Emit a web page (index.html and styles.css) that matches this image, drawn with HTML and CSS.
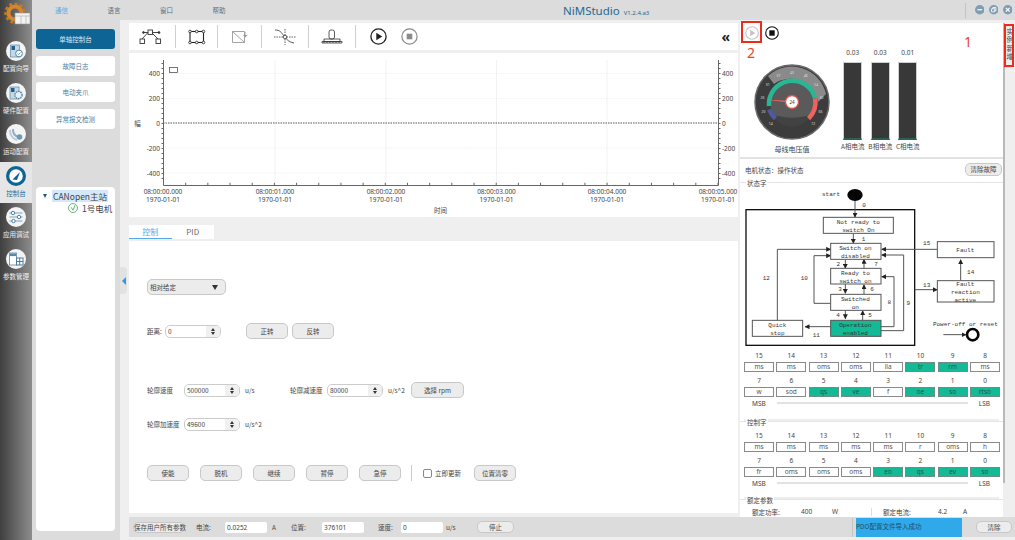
FILE: index.html
```html
<!DOCTYPE html>
<html lang="zh-CN">
<head>
    <meta charset="UTF-8">
    <title>NiMStudio</title>
    <link rel="stylesheet" href="styles.css">
</head>
<body>
<div class="app">
    <!-- 左侧图标栏 -->
    <div class="rail">
        <div class="logo">
            <svg width="26" height="24" viewBox="0 0 26 24">
                <circle cx="11" cy="10" r="6.5" fill="none" stroke="#d4862a" stroke-width="4"/>
                <circle cx="11" cy="10" r="9.5" fill="none" stroke="#c9791f" stroke-width="2.4" stroke-dasharray="3 2.5"/>
                <rect x="11" y="10" width="15" height="11" fill="#f2f2f2" stroke="#999" stroke-width=".6"/>
                <path d="M11 13h15M17 13v8M22 13v8" stroke="#aaa" stroke-width=".6"/>
            </svg>
        </div>
        <div class="rail-item">
            <svg class="rail-icon" viewBox="0 0 20 20"><circle cx="10" cy="10" r="10" fill="#f4f4f4"/><rect x="4.5" y="4" width="9" height="12" fill="#c5d8e6" stroke="#5b86a6" stroke-width=".7"/><rect x="5.5" y="5" width="3.5" height="4" fill="#22608c"/><circle cx="13" cy="12.5" r="3.4" fill="#fff" stroke="#4d83a8"/><path d="M11.6 12.5l1 1 1.8-1.9" fill="none" stroke="#4d83a8" stroke-width=".8"/></svg>
            <span>配置向导</span>
        </div>
        <div class="rail-item">
            <svg class="rail-icon" viewBox="0 0 20 20"><circle cx="10" cy="10" r="10" fill="#f4f4f4"/><rect x="4" y="4" width="9" height="12" fill="#c5d8e6" stroke="#5b86a6" stroke-width=".7"/><rect x="5" y="5" width="3.5" height="4" fill="#22608c"/><circle cx="12.5" cy="12" r="3.6" fill="#e8f0f6" stroke="#4d83a8" stroke-width="1.3" stroke-dasharray="1.6 .7"/></svg>
            <span>硬件配置</span>
        </div>
        <div class="rail-item">
            <svg class="rail-icon" viewBox="0 0 20 20"><circle cx="10" cy="10" r="10" fill="#f4f4f4"/><path d="M4 6a10 10 0 0 0 7 10" fill="none" stroke="#b5cbda" stroke-width="2"/><path d="M7 5a8 8 0 0 0 5 8" fill="none" stroke="#8fb0c6" stroke-width="2"/><circle cx="13.5" cy="13" r="2.8" fill="#6f9ab6"/></svg>
            <span>运动配置</span>
        </div>
        <div class="rail-item active">
            <svg class="rail-icon" viewBox="0 0 20 20"><circle cx="10" cy="10" r="8.4" fill="#fff" stroke="#0f6496" stroke-width="3.2"/><path d="M6.5 13.5L14 6l-3 8z" fill="#0f6496"/></svg>
            <span>控制台</span>
        </div>
        <div class="rail-item">
            <svg class="rail-icon" viewBox="0 0 20 20"><circle cx="10" cy="10" r="10" fill="#f4f4f4"/><path d="M3.5 6h13M3.5 10h13M3.5 14h13" stroke="#6f9ab6" stroke-width=".9"/><circle cx="7" cy="6" r="1.7" fill="#fff" stroke="#4d83a8"/><circle cx="13" cy="10" r="1.7" fill="#fff" stroke="#4d83a8"/><circle cx="7.5" cy="14" r="1.7" fill="#fff" stroke="#4d83a8"/></svg>
            <span>应用调试</span>
        </div>
        <div class="rail-item">
            <svg class="rail-icon" viewBox="0 0 20 20"><circle cx="10" cy="10" r="10" fill="#f4f4f4"/><rect x="3.5" y="4" width="7" height="12" fill="#fff" stroke="#5b86a6" stroke-width=".8"/><rect x="4" y="4.5" width="6" height="2.6" fill="#5b86a6"/><rect x="10.5" y="9" width="6.5" height="7" fill="#fff" stroke="#4d7b9c"/><path d="M13.7 9v7M10.5 12.5h6.5" stroke="#4d7b9c"/></svg>
            <span>参数管理</span>
        </div>
    </div>

    <div class="shell">
        <!-- 顶部菜单 -->
        <div class="topbar">
            <div class="menu">
                <span class="menu-item current">通信</span>
                <span class="menu-item">语言</span>
                <span class="menu-item">窗口</span>
                <span class="menu-item">帮助</span>
            </div>
            <div class="title">NiMStudio <small>V1.2.4.a3</small></div>
            <div class="win-btns">
                <span class="win-sep"></span>
                <svg class="win-btn" viewBox="0 0 10 10"><circle cx="5" cy="5" r="5" fill="#7f9db3"/><path d="M2.5 5h5" stroke="#fff" stroke-width="1.2"/></svg>
                <svg class="win-btn" viewBox="0 0 10 10"><circle cx="5" cy="5" r="5" fill="#7f9db3"/><path d="M2.7 4h3.3v3.2H2.7zM4 4V2.7h3.3V6H6" fill="none" stroke="#fff" stroke-width=".9"/></svg>
                <svg class="win-btn" viewBox="0 0 10 10"><circle cx="5" cy="5" r="5" fill="#7f9db3"/><path d="M3 3l4 4M7 3l-4 4" stroke="#fff" stroke-width="1.2"/></svg>
            </div>
        </div>

        <div class="body">
            <!-- 功能导航 -->
            <div class="nav">
                <div class="nav-btn selected">单轴控制台</div>
                <div class="nav-btn">故障日志</div>
                <div class="nav-btn">电动夹爪</div>
                <div class="nav-btn">异常报文检测</div>
                <div class="tree">
                    <div class="tree-root">
                        <i class="tree-arrow"></i>
                        <span class="tree-label">CANopen主站</span>
                    </div>
                    <div class="tree-child">
                        <svg width="10" height="10" viewBox="0 0 10 10"><circle cx="5" cy="5" r="4.5" fill="#fff" stroke="#3fa35a" stroke-width=".8"/><path d="M3 4.2l2 3 2-5" fill="none" stroke="#3fa35a" stroke-width=".8"/></svg>
                        <span>1号电机</span>
                    </div>
                </div>
            </div>
            <div class="gutter"><div class="collapse"><i></i></div></div>

            <div class="content">
                <div class="upper">
                    <div class="main">
                        <!-- 工具栏 -->
                        <div class="toolbar">
                            <div class="tool tool-wide">
                                <svg width="26" height="20" viewBox="0 0 26 20" fill="none" stroke="#333" stroke-width=".9"><rect x="1" y="12" width="4.5" height="4.5"/><rect x="17" y="12" width="4.5" height="4.5"/><rect x="9" y="3" width="4.5" height="4.5"/><path d="M3 12L9 5.5M13 6l6 6M4.500 5.500H9M13.500 5.500h6.500"/><circle cx="4.500" cy="5.500" r=".9" fill="#333"/><circle cx="20" cy="5.500" r=".9" fill="#333"/></svg>
                            </div>
                            <div class="tool tool-narrow">
                                <svg width="18" height="16" viewBox="0 0 18 16" fill="none" stroke="#222"><rect x="2" y="2.5" width="13.5" height="11" stroke-width="1.1"/><g fill="#fff" stroke-width=".8"><circle cx="2" cy="2.5" r="1.3"/><circle cx="8.7" cy="2.5" r="1.3"/><circle cx="15.5" cy="2.5" r="1.3"/><circle cx="2" cy="13.5" r="1.3"/><circle cx="8.7" cy="13.5" r="1.3"/><circle cx="15.5" cy="13.5" r="1.3"/></g></svg>
                            </div>
                            <div class="tool">
                                <svg width="18" height="16" viewBox="0 0 18 16" fill="none" stroke="#999" stroke-width=".9"><path d="M1.5 2.5h12v11h-12zM1.5 2.5l12 11"/><path d="M14 3v4"/><path d="M12 6h4.500l-2.200 2.500z" fill="#999" stroke="none"/></svg>
                            </div>
                            <div class="tool tool-wide">
                                <svg width="22" height="18" viewBox="0 0 22 18" fill="none" stroke="#333" stroke-width=".8"><path d="M1 2c5 0 6 2 9 6s5 6 10 7"/><path d="M0 9h22" stroke-dasharray="1.500 1"/><path d="M11 1v16" stroke-dasharray="1.500 1"/><circle cx="11" cy="9" r="1.800" fill="#fff"/></svg>
                            </div>
                            <div class="tool tool-wide">
                                <svg width="22" height="18" viewBox="0 0 22 18" fill="none" stroke="#333" stroke-width=".8"><rect x="8" y="2" width="5.500" height="9" rx="2"/><path d="M3 11h16v2.500H3zM1 13.500h20v1.500H1z"/><path d="M3 13.500v1.500M6 13.500v1.500M9 13.500v1.500M12 13.500v1.500M15 13.500v1.500M18 13.500v1.500"/></svg>
                            </div>
                            <svg class="round-btn" width="17" height="17" viewBox="0 0 17 17"><circle cx="8.500" cy="8.500" r="7.600" fill="#fff" stroke="#222" stroke-width="1.300"/><path d="M6.300 4.800v7.400l6-3.700z" fill="#222"/></svg>
                            <svg class="round-btn" width="17" height="17" viewBox="0 0 17 17"><circle cx="8.500" cy="8.500" r="7.600" fill="#fff" stroke="#8a8a8a" stroke-width="1.200"/><rect x="5.700" y="5.700" width="5.600" height="5.600" fill="#8a8a8a"/></svg>
                            <span class="chevrons">«</span>
                        </div>

                        <!-- 曲线 -->
                        <div class="chart">
                            <svg width="609" height="164" viewBox="129 53 609 164" font-family="Noto Sans, sans-serif" font-size="6.500" fill="#444">
                                <g stroke="#ececec" stroke-width=".7">
                                    <path d="M275 60v125M386 60v125M496.500 60v125M607 60v125"/>
                                    <path d="M163 73.500h555M163 98.500h555M163 148h555M163 173h555" stroke-dasharray="1.500 1"/>
                                </g>
                                <path d="M163 123h555" stroke="#555" stroke-dasharray="1.500 1"/>
                                <path d="M163.500 60v125.500H718.500V60" fill="none" stroke="#666"/>
                                <path d="M163 184h556" stroke="#666" stroke-width="2.500" stroke-dasharray="1 21.180"/>
                                <path d="M162.500 63v120" stroke="#666" stroke-width="2" stroke-dasharray="1 4"/>
                                <path d="M719.500 63v120" stroke="#666" stroke-width="2" stroke-dasharray="1 4"/>
                                <rect x="169.500" y="67.500" width="8" height="5" fill="#fff" stroke="#555" stroke-width=".8"/>
                                <g text-anchor="end">
                                    <text x="160" y="76">400</text><text x="160" y="101">200</text><text x="160" y="125.500">0</text><text x="160" y="150.500">-200</text><text x="160" y="175.500">-400</text>
                                </g>
                                <g>
                                    <text x="722" y="76">400</text><text x="722" y="101">200</text><text x="722" y="125.500">0</text><text x="722" y="150.500">-200</text><text x="722" y="175.500">-400</text>
                                </g>
                                <g text-anchor="middle">
                                    <text x="163" y="193.500">08:00:00.000</text><text x="163" y="202">1970-01-01</text>
                                    <text x="275" y="193.500">08:00:01.000</text><text x="275" y="202">1970-01-01</text>
                                    <text x="386" y="193.500">08:00:02.000</text><text x="386" y="202">1970-01-01</text>
                                    <text x="496.500" y="193.500">08:00:03.000</text><text x="496.500" y="202">1970-01-01</text>
                                    <text x="607" y="193.500">08:00:04.000</text><text x="607" y="202">1970-01-01</text>
                                    <text x="718" y="193.500">08:00:05.000</text><text x="718" y="202">1970-01-01</text>
                                    <text x="440.500" y="213" font-family="Noto Sans CJK SC, sans-serif">时间</text>
                                    <text x="137.500" y="125.500" font-family="Noto Sans CJK SC, sans-serif">幅</text>
                                </g>
                            </svg>
                        </div>

                        <div class="tabs">
                            <span class="tab on">控制</span>
                            <span class="tab">PID</span>
                        </div>

                        <!-- 控制面板 -->
                        <div class="panel">
                            <div class="row row-mode">
                                <div class="dropdown"><span>相对给定</span><i></i></div>
                            </div>
                            <div class="row row-dist">
                                <label class="lbl-short">距离:</label>
                                <div class="spin"><span>0</span><b><i class="up"></i><i class="down"></i></b></div>
                                <button class="btn first-btn">正转</button>
                                <button class="btn next-btn">反转</button>
                            </div>
                            <div class="row row-speed">
                                <label class="lbl">轮廓速度</label>
                                <div class="spin"><span>500000</span><b><i class="up"></i><i class="down"></i></b></div>
                                <span class="unit unit-wide">u/s</span>
                                <label class="lbl">轮廓减速度</label>
                                <div class="spin"><span>80000</span><b><i class="up"></i><i class="down"></i></b></div>
                                <span class="unit unit-mid">u/s^2</span>
                                <button class="btn btn-rpm">选择 rpm</button>
                            </div>
                            <div class="row row-acc">
                                <label class="lbl">轮廓加速度</label>
                                <div class="spin"><span>49600</span><b><i class="up"></i><i class="down"></i></b></div>
                                <span class="unit">u/s^2</span>
                            </div>
                            <div class="row row-actions">
                                <button class="btn">使能</button>
                                <button class="btn">脱机</button>
                                <button class="btn">继续</button>
                                <button class="btn">暂停</button>
                                <button class="btn">急停</button>
                                <span class="vsep"></span>
                                <span class="check"></span>
                                <span class="check-text">立即更新</span>
                                <button class="btn">位置清零</button>
                            </div>
                        </div>
                    </div>

                    <!-- 右侧状态 -->
                    <div class="side">
                        <div class="meters">
                            <div class="run-btns">
                                <svg width="14" height="14" viewBox="0 0 14 14"><circle cx="7" cy="7" r="6.300" fill="#fff" stroke="#c4c4c4" stroke-width="1.100"/><path d="M5.200 3.800v6.400l5-3.200z" fill="#c4c4c4"/></svg>
                                <svg width="14" height="14" viewBox="0 0 14 14"><circle cx="7" cy="7" r="6.300" fill="#fff" stroke="#111" stroke-width="1.100"/><rect x="4.300" y="4.300" width="5.400" height="5.400" fill="#111"/></svg>
                            </div>
                            <div class="meter-row">
                                <div class="gauge">
                                    <svg width="80" height="80" viewBox="-40 -40 80 80" font-family="Noto Sans, sans-serif" font-size="3.400" fill="#ddd" text-anchor="middle">
                                        <circle r="37" fill="#3c3c3c" stroke="#6a6a6a" stroke-width="1.500"/>
                                        <path d="M-24-26A35 35 0 0 1 34-8L26 0A28 28 0 0 0-18-18z" fill="#8a8a8a"/>
                                        <circle r="22" fill="#5a5a5a"/>
                                        <path d="M-20 12A22 22 0 0 0 20 12C8 17-8 17-20 12z" fill="#424242"/>
                                        <path d="M-23 4A23.500 23.500 0 0 1 23.200-3.600" fill="none" stroke="#27b795" stroke-width="4.500"/>
                                        <path d="M23.200-3.600A23.500 23.500 0 0 1 16.600 16.600" fill="none" stroke="#f0625f" stroke-width="4.500"/>
                                        <path d="M-22.800 7.400A23.500 23.500 0 0 0-16.600 16.600" fill="none" stroke="#4e5a9c" stroke-width="4.500"/>
                                        <text x="-21.200" y="22.500">14</text><text x="-28.500" y="10.500">20</text><text x="-29.600" y="-3.500">26</text><text x="-24.300" y="-16.500">31</text><text x="-13.600" y="-25.500">37</text><text x="0" y="-28.500">43</text><text x="13.600" y="-25.500">48</text><text x="24.300" y="-16.500">54</text><text x="29.600" y="-3.500">60</text><text x="28.500" y="10.500">66</text><text x="21.200" y="22.500">72</text>
                                        <path d="M-27-2.500L0-1 0 1z" fill="#f0625f"/>
                                        <circle r="6.500" fill="#fff" stroke="#e2504d" stroke-width="1.300"/>
                                        <text y="1.600" fill="#333" font-size="4.500">24</text>
                                    </svg>
                                    <div class="gauge-cap">母线电压值</div>
                                </div>
                                <div class="bar-col"><span class="bar-val">0.03</span><div class="bar"></div><span class="bar-cap">A相电流</span></div>
                                <div class="bar-col"><span class="bar-val">0.03</span><div class="bar"></div><span class="bar-cap">B相电流</span></div>
                                <div class="bar-col"><span class="bar-val">0.01</span><div class="bar"></div><span class="bar-cap">C相电流</span></div>
                            </div>
                        </div>

                        <div class="motor-row">
                            <span>电机状态：操作状态</span>
                            <button class="btn btn-clear">清除故障</button>
                        </div>

                        <div class="group">
                            <div class="group-title"><span>状态字</span></div>
                            <svg class="state" width="263" height="161" viewBox="0 42 789 483" font-family="Liberation Mono, monospace" font-size="18" fill="#333" text-anchor="middle">
                                <defs>
                                    <marker id="ah" markerWidth="5" markerHeight="5" refX="4.500" refY="2.500" orient="auto"><path d="M0 0L5 2.500 0 5z" fill="#222"/></marker>
                                </defs>
                                <rect x="18" y="107" width="506" height="407" fill="none" stroke="#111" stroke-width="4"/>
                                <g fill="none" stroke="#555" stroke-width="3" marker-end="url(#ah)">
                                    <path d="M345 70V130"/>
                                    <path d="M340 178V208"/>
                                    <path d="M316 256V283"/><path d="M372 283V256"/>
                                    <path d="M316 330V358"/><path d="M372 361V332"/>
                                    <path d="M316 409V434"/><path d="M368 439V410"/>
                                    <path d="M272 458H195"/>
                                    <path d="M112 439V226H272"/>
                                    <path d="M272 388H222V245H272"/>
                                    <path d="M423 458H462V308H425"/>
                                    <path d="M423 470H491V243H425"/>
                                    <path d="M592 226H425"/>
                                    <path d="M524 347H592"/>
                                    <path d="M662 320V257"/>
                                    <path d="M610 482H678"/>
                                </g>
                                <g fill="#fff" stroke="#555" stroke-width="3">
                                    <rect x="250" y="130" width="210" height="48"/>
                                    <rect x="272" y="208" width="151" height="48"/>
                                    <rect x="272" y="283" width="151" height="47"/>
                                    <rect x="272" y="361" width="151" height="48"/>
                                    <rect x="272" y="439" width="151" height="48" fill="#14b995"/>
                                    <rect x="37" y="439" width="151" height="48"/>
                                    <rect x="592" y="203" width="170" height="48"/>
                                    <rect x="592" y="320" width="170" height="64"/>
                                </g>
                                <ellipse cx="345" cy="63" rx="23" ry="18" fill="#050505"/>
                                <circle cx="698" cy="482" r="17" fill="#fff" stroke="#050505" stroke-width="8"/>
                                <text x="355" y="150">Not ready to</text><text x="355" y="174">switch On</text>
                                <text x="346" y="228">Switch on</text><text x="346" y="252">disabled</text>
                                <text x="346" y="302">Ready to</text><text x="346" y="326">switch on</text>
                                <text x="346" y="381">Switched</text><text x="346" y="405">on</text>
                                <text x="346" y="459">Operation</text><text x="346" y="483">enabled</text>
                                <text x="112" y="459">Quick</text><text x="112" y="483">stop</text>
                                <text x="676" y="233">Fault</text>
                                <text x="676" y="335">Fault</text><text x="676" y="359">reaction</text><text x="676" y="383">active</text>
                                <text x="273" y="65">start</text>
                                <text x="372" y="100">0</text><text x="371" y="200">1</text><text x="295" y="277">2</text><text x="408" y="277">7</text>
                                <text x="300" y="352">3</text><text x="396" y="352">6</text><text x="294" y="429">4</text><text x="390" y="429">5</text>
                                <text x="193" y="317">10</text><text x="79" y="317">12</text><text x="448" y="390">8</text><text x="505" y="393">9</text>
                                <text x="229" y="489">11</text><text x="560" y="214">15</text><text x="692" y="301">14</text><text x="560" y="338">13</text>
                                <text x="676" y="456">Power-off or reset</text>
                            </svg>
                            <div class="bits">
                                <div class="bit"><span>15</span><b>ms</b></div><div class="bit"><span>14</span><b>ms</b></div><div class="bit"><span>13</span><b>oms</b></div><div class="bit"><span>12</span><b>oms</b></div>
                                <div class="bit"><span>11</span><b>ila</b></div><div class="bit on"><span>10</span><b>tr</b></div><div class="bit on"><span>9</span><b>rm</b></div><div class="bit"><span>8</span><b>ms</b></div>
                                <div class="bit"><span>7</span><b>w</b></div><div class="bit"><span>6</span><b>sod</b></div><div class="bit on"><span>5</span><b>qs</b></div><div class="bit on"><span>4</span><b>ve</b></div>
                                <div class="bit"><span>3</span><b>f</b></div><div class="bit on"><span>2</span><b>oe</b></div><div class="bit on"><span>1</span><b>so</b></div><div class="bit on"><span>0</span><b>rtso</b></div>
                            </div>
                            <div class="msb"><span>MSB</span><i></i><span>LSB</span></div>
                        </div>

                        <div class="group group-next">
                            <div class="group-title"><span>控制字</span></div>
                            <div class="bits bits-top">
                                <div class="bit"><span>15</span><b>ms</b></div><div class="bit"><span>14</span><b>ms</b></div><div class="bit"><span>13</span><b>ms</b></div><div class="bit"><span>12</span><b>ms</b></div>
                                <div class="bit"><span>11</span><b>ms</b></div><div class="bit"><span>10</span><b>r</b></div><div class="bit"><span>9</span><b>oms</b></div><div class="bit"><span>8</span><b>h</b></div>
                                <div class="bit"><span>7</span><b>fr</b></div><div class="bit"><span>6</span><b>oms</b></div><div class="bit"><span>5</span><b>oms</b></div><div class="bit"><span>4</span><b>oms</b></div>
                                <div class="bit on"><span>3</span><b>eo</b></div><div class="bit on"><span>2</span><b>qs</b></div><div class="bit on"><span>1</span><b>ev</b></div><div class="bit on"><span>0</span><b>so</b></div>
                            </div>
                            <div class="msb"><span>MSB</span><i></i><span>LSB</span></div>
                        </div>

                        <div class="group group-next group-rated">
                            <div class="group-title"><span>额定参数</span></div>
                            <div class="rated">
                                <span class="rated-key">额定功率:</span><span class="rated-val">400</span><span class="rated-unit">W</span>
                                <i></i>
                                <span class="rated-key2">额定电流:</span><span class="rated-val2">4.2</span><span class="rated-val2">A</span>
                            </div>
                        </div>
                    </div>
                    <div class="scroll"></div>
                    <div class="strip">实例新增</div>
                </div>

                <!-- 底部状态栏 -->
                <div class="statusbar">
                    <button class="btn btn-save">保存用户所有参数</button>
                    <label class="st-label">电流:</label>
                    <span class="st-input">0.0252</span>
                    <span class="st-unit">A</span>
                    <label class="st-label2">位置:</label>
                    <span class="st-input">376101</span>
                    <label class="st-label3">速度:</label>
                    <span class="st-input">0</span>
                    <span class="st-unit2">u/s</span>
                    <button class="btn btn-stop">停止</button>
                    <span class="st-sep"></span>
                    <span class="st-msg">PDO配置文件导入成功</span>
                    <button class="btn btn-wipe">清除</button>
                </div>
            </div>
        </div>
    </div>

    <!-- 红色标注 -->
    <div class="mark mark-play"></div>
    <div class="mark mark-strip"></div>
    <div class="mark-num num-one">1</div>
    <div class="mark-num num-two">2</div>
</div>
</body>
</html>
```

FILE: styles.css
```css
* {
    box-sizing: border-box;
    margin: 0;
    padding: 0;
}

body {
    width: 1015px;
    height: 540px;
    overflow: hidden;
    background-color: #eef3ea;
    font-family: "Noto Sans CJK SC", "Noto Sans", sans-serif;
    font-size: 6.5px;
    color: #444;
}

.app {
    position: relative;
    display: flex;
    width: 1015px;
    height: 540px;
}

/* 左侧图标栏 */
.rail {
    width: 32px;
    flex: none;
    background: linear-gradient(90deg, #3f3f3f, #8d8d8d);
}

.logo {
    height: 37px;
    padding: 3px 0 0 4px;
}

.rail-item {
    display: flex;
    flex-direction: column;
    align-items: center;
    height: 41.6px;
    padding-top: 4px;
    color: #f0f0f0;
}

.rail-item span {
    margin-top: 3px;
    line-height: 8px;
}

.rail-icon {
    width: 20px;
    height: 20px;
}

.rail-item.active {
    background-color: #e6e6e6;
    color: #1a6c9c;
}

.shell {
    flex: 1;
    min-width: 0;
}

/* 顶部菜单 */
.topbar {
    position: relative;
    display: flex;
    align-items: center;
    height: 20px;
    background-color: #dcdcdc;
}

.menu {
    display: flex;
    padding-left: 23px;
}

.menu-item {
    width: 52.5px;
    color: #5a6f80;
}

.menu-item.current {
    color: #55aee5;
}

.title {
    margin-left: 298px;
    font-family: "Noto Sans", sans-serif;
    font-size: 11.5px;
    color: #1c6a97;
    white-space: nowrap;
}

.title small {
    font-size: 6px;
    margin-left: 1px;
}

.win-btns {
    display: flex;
    align-items: center;
    gap: 4.5px;
    margin-left: auto;
    padding-right: 3px;
}

.win-sep {
    width: 1px;
    height: 15px;
    margin-right: 4px;
    background-color: #c4c4c4;
}

.win-btn {
    width: 9.5px;
    height: 9.5px;
}

.body {
    display: flex;
    height: 520px;
}

/* 功能导航 */
.nav {
    width: 88px;
    flex: none;
    padding: 9px 5px 0 4px;
    background-color: #dcdcdc;
}

.nav-btn {
    height: 20px;
    margin-bottom: 6.5px;
    border-radius: 3px;
    background-color: #fff;
    color: #4a7d9e;
    text-align: center;
    line-height: 20px;
}

.nav-btn.selected {
    background-color: #0f6496;
    color: #dcebf4;
}

.tree {
    height: 344px;
    margin-top: 58px;
    padding-top: 3px;
    border-radius: 4px;
    background-color: #fff;
    font-size: 8.5px;
    color: #444;
}

.tree-root {
    display: flex;
    align-items: center;
    height: 12px;
    padding-left: 7px;
}

.tree-arrow {
    border-left: 2.5px solid transparent;
    border-right: 2.5px solid transparent;
    border-top: 4px solid #1b5e8a;
}

.tree-label {
    margin-left: 5px;
    padding: 0 1px;
    line-height: 12px;
    background-color: #d3e9fb;
    white-space: nowrap;
}

.tree-child {
    display: flex;
    align-items: center;
    gap: 4px;
    height: 12px;
    padding-left: 32px;
    white-space: nowrap;
}

.gutter {
    width: 9px;
    flex: none;
    background-color: #efefef;
}

.collapse {
    display: flex;
    align-items: center;
    width: 7px;
    height: 27px;
    margin-top: 247px;
    padding-left: 1.5px;
    border-radius: 0 4px 4px 0;
    background-color: #e2e2e2;
}

.collapse i {
    border-top: 4px solid transparent;
    border-bottom: 4px solid transparent;
    border-right: 4px solid #2d9be0;
}

.content {
    flex: 1;
    min-width: 0;
    background-color: #efefef;
}

.upper {
    display: flex;
    height: 497px;
    padding-top: 3px;
}

.main {
    width: 609px;
    flex: none;
    margin-right: 2px;
}

/* 工具栏 */
.toolbar {
    display: flex;
    align-items: center;
    height: 27px;
    background-color: #fff;
}

.tool {
    display: flex;
    align-items: center;
    justify-content: center;
    width: 44px;
    height: 23px;
    border-right: 1px solid #d0d0d0;
}

.tool-wide {
    width: 47px;
}

.tool-narrow {
    width: 42px;
}

.round-btn {
    margin-left: 14px;
}

.chevrons {
    margin-left: auto;
    padding-right: 8px;
    font-family: "Noto Sans", sans-serif;
    font-size: 14px;
    font-weight: 700;
    line-height: 14px;
    color: #222;
}

.chart {
    height: 164px;
    margin-top: 3px;
    background-color: #fff;
}

.chart svg {
    display: block;
}

.tabs {
    display: flex;
    width: 85px;
    height: 14px;
    margin-top: 8px;
    background-color: #fff;
}

.tab {
    width: 43px;
    font-size: 8px;
    line-height: 14px;
    text-align: center;
    color: #666;
}

.tab.on {
    color: #55a8e8;
    border-bottom: 1px solid #55a8e8;
}

/* 控制面板 */
.panel {
    display: flow-root;
    height: 272px;
    margin-top: 2px;
    padding-left: 18px;
    background-color: #fff;
}

.row {
    display: flex;
    align-items: center;
    height: 16px;
}

.row-mode {
    margin-top: 38px;
}

.row-dist {
    margin-top: 28px;
}

.row-speed {
    margin-top: 43px;
}

.row-acc {
    margin-top: 18px;
}

.row-actions {
    margin-top: 33px;
}

.dropdown {
    display: flex;
    align-items: center;
    justify-content: space-between;
    width: 79px;
    height: 16px;
    padding: 0 7px 0 2px;
    border: 1px solid #c8c8c8;
    border-radius: 5px;
    background-color: #ececec;
}

.dropdown i {
    border-left: 3px solid transparent;
    border-right: 3px solid transparent;
    border-top: 5px solid #333;
}

.lbl-short {
    width: 18px;
}

.lbl {
    width: 37px;
    white-space: nowrap;
}

.spin {
    display: flex;
    align-items: center;
    justify-content: space-between;
    width: 56px;
    height: 13px;
    padding-left: 2px;
    border: 1px solid #ccc;
    border-radius: 5px;
    background-color: #fff;
    overflow: hidden;
}

.spin b {
    display: flex;
    flex-direction: column;
    align-items: center;
    justify-content: center;
    gap: 1px;
    width: 14px;
    height: 100%;
    background-color: #f0f0f0;
}

.spin i {
    border-left: 2px solid transparent;
    border-right: 2px solid transparent;
}

.spin .up {
    border-bottom: 3px solid #333;
}

.spin .down {
    border-top: 3px solid #333;
}

.unit {
    margin-left: 5px;
}

.unit-wide {
    width: 45px;
}

.unit-mid {
    width: 23px;
}

.btn {
    width: 42px;
    height: 16px;
    border: 1px solid #c8c8c8;
    border-radius: 5px;
    background-color: #ececec;
    font-family: inherit;
    font-size: 6.5px;
    color: #444;
    white-space: nowrap;
}

.first-btn {
    margin-left: 25px;
}

.next-btn {
    margin-left: 4px;
}

.btn-rpm {
    width: 53px;
}

.row-actions .btn {
    margin-right: 11px;
}

.row-actions .btn:nth-of-type(5) {
    margin-right: 10px;
}

.vsep {
    width: 1px;
    height: 16px;
    background-color: #ccc;
}

.check {
    width: 9px;
    height: 9px;
    margin-left: 11px;
    border: 1px solid #888;
    border-radius: 2px;
    background-color: #fff;
}

.check-text {
    width: 39px;
    margin-left: 3px;
}

/* 右侧状态 */
.side {
    width: 263px;
    flex: none;
    height: 494px;
    overflow: hidden;
    background-color: #fff;
}

.meters {
    height: 136px;
    border-bottom: 2px solid #e2e2e2;
}

.run-btns {
    display: flex;
    gap: 6px;
    padding: 3px 0 0 5px;
    height: 18px;
}

.meter-row {
    display: flex;
    margin-top: 7px;
}

.gauge {
    width: 80px;
    margin: 14px 7px 0 12px;
    text-align: center;
}

.gauge svg {
    display: block;
}

.gauge-cap {
    font-size: 7px;
    line-height: 9px;
    margin-top: 3px;
    white-space: nowrap;
}

.bar-col {
    display: flex;
    flex-direction: column;
    align-items: center;
    width: 27.5px;
}

.bar-val {
    height: 10px;
    margin-bottom: 4px;
    font-family: "Noto Sans", sans-serif;
    line-height: 10px;
}

.bar {
    width: 19px;
    height: 78px;
    border: 1px solid #cfcfcf;
    border-bottom: 2px solid #2d5f52;
    background-color: #383838;
}

.bar-cap {
    margin-top: 2px;
    line-height: 9px;
    white-space: nowrap;
}

.motor-row {
    display: flex;
    align-items: center;
    justify-content: space-between;
    height: 21px;
    padding: 0 1px 0 5px;
}

.btn-clear {
    width: 37px;
    height: 13px;
    margin-top: -1px;
}

.group {
    margin-top: 2px;
    padding-right: 3px;
    border-top: 1px solid #e4e4e4;
}

.group-title {
    height: 10px;
    margin-top: -5px;
    padding-left: 6px;
    line-height: 10px;
}

.group-title span {
    padding: 0 1px;
    background-color: #fff;
}

.state {
    display: block;
}

.bits {
    display: grid;
    grid-template-columns: repeat(8, 1fr);
    column-gap: 2.25px;
    row-gap: 2px;
    padding-left: 4px;
}

.bits-top {
    margin-top: 2px;
}

.bit {
    text-align: center;
}

.bit span {
    display: block;
    height: 13px;
    line-height: 13px;
    font-family: "Noto Sans", sans-serif;
}

.bit b {
    display: block;
    height: 10px;
    border: 1px solid #8a8a8a;
    font-family: "Noto Sans", sans-serif;
    font-weight: 400;
    line-height: 8px;
    color: #555;
}

.bit.on b {
    background-color: #14b995;
    border-color: #6a8f86;
    color: #1f5a4c;
}

.msb {
    display: flex;
    align-items: center;
    height: 12px;
    padding: 0 10px 0 12px;
    font-family: "Noto Sans", sans-serif;
}

.msb i {
    flex: 1;
    height: 1.5px;
    margin: 0 11px;
    background-color: #e2e2e2;
}

.group-next {
    margin-top: 12px;
    box-shadow: 0 -6px 0 -4px #eeeeee;
}

.group-rated {
    margin-top: 9.5px;
}

.rated {
    display: flex;
    align-items: center;
    height: 8px;
    line-height: 8px;
    margin-top: 3px;
    padding-left: 12px;
}

.rated-key {
    width: 49px;
}

.rated-val {
    width: 31px;
    font-family: "Noto Sans", sans-serif;
}

.rated-unit {
    width: 39px;
    font-family: "Noto Sans", sans-serif;
}

.rated i {
    width: 1px;
    height: 8px;
    margin-right: 11px;
    background-color: #ddd;
}

.rated-key2 {
    width: 55px;
}

.rated-val2 {
    width: 25px;
    margin-left: 0;
    font-family: "Noto Sans", sans-serif;
}

.scroll {
    width: 2px;
    height: 460px;
    flex: none;
    background-color: #b9b9b9;
}

.strip {
    width: 10px;
    flex: none;
    padding-top: 5px;
    padding-left: 1px;
    font-size: 7px;
    letter-spacing: 1.2px;
    writing-mode: vertical-rl;
    color: #444;
}

/* 底部状态栏 */
.statusbar {
    display: flex;
    align-items: center;
    height: 20px;
    padding-left: 4px;
    background-color: #dcdcdc;
}

.btn-save {
    width: 52px;
    height: 11px;
    line-height: 9px;
    padding: 0;
}

.st-label {
    width: 29px;
    margin-left: 11px;
}

.st-input {
    width: 42px;
    height: 11px;
    padding-left: 2px;
    border-radius: 2px;
    background-color: #fff;
    font-family: "Noto Sans", sans-serif;
    line-height: 11px;
}

.st-unit {
    width: 24px;
    padding-left: 5px;
}

.st-label2 {
    width: 31px;
}

.st-label3 {
    width: 23px;
    margin-left: 14px;
}

.st-unit2 {
    width: 34px;
    padding-left: 3px;
}

.btn-stop {
    width: 37px;
    height: 12px;
}

.st-sep {
    width: 1px;
    height: 19px;
    margin-left: 338px;
    background-color: #c4c4c4;
}

.st-msg {
    width: 106px;
    height: 19px;
    margin-left: 3px;
    background-color: #2fa9ea;
    line-height: 17px;
    color: #1f4f70;
}

.btn-wipe {
    width: 36px;
    height: 12px;
    margin-left: 14px;
    line-height: 10px;
    padding: 0;
}

/* 红色标注 */
.mark {
    position: absolute;
    border: 2px solid #f02a1a;
}

.mark-play {
    left: 741px;
    top: 21px;
    width: 21px;
    height: 22px;
}

.mark-strip {
    left: 1004px;
    top: 24px;
    width: 10px;
    height: 43px;
}

.mark-num {
    position: absolute;
    font-family: "Noto Sans", sans-serif;
    font-size: 14px;
    line-height: 16px;
    color: #f0401f;
}

.num-one {
    left: 964px;
    top: 34px;
}

.num-two {
    left: 747px;
    top: 45px;
}
```
